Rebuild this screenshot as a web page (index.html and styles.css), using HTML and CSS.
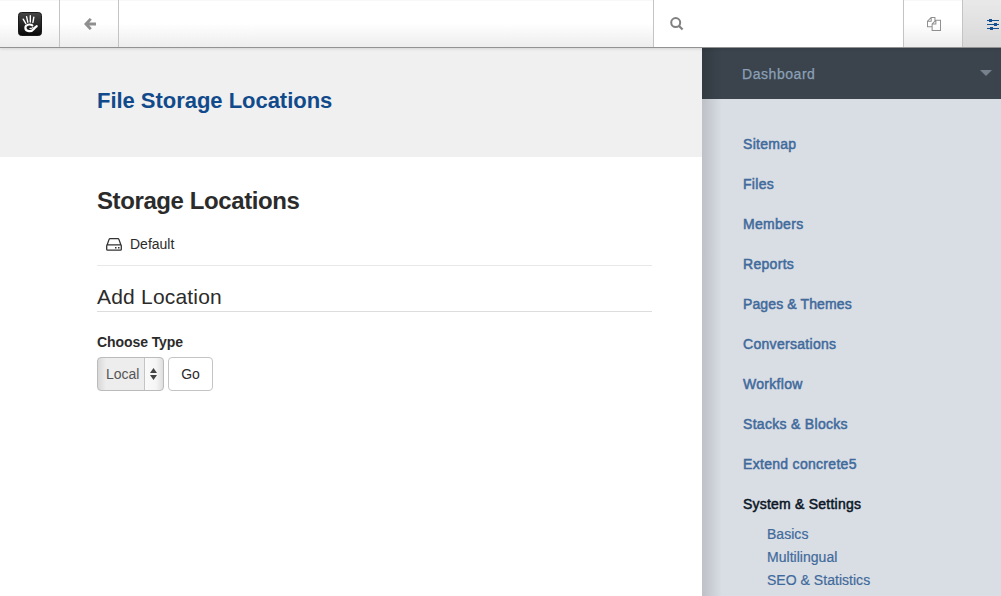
FILE: index.html
```html
<!DOCTYPE html>
<html lang="en">
<head>
<meta charset="utf-8">
<title>File Storage Locations</title>
<link rel="stylesheet" href="styles.css">
</head>
<body>
<header class="toolbar">
  <a class="tool tool-logo">
    <svg width="24" height="24" viewBox="0 0 24 24">
      <defs><linearGradient id="g" x1="0" y1="0" x2="0" y2="1"><stop offset="0" stop-color="#454545"/><stop offset="1" stop-color="#080808"/></linearGradient></defs>
      <rect x=".5" y=".5" width="23" height="23" rx="3" fill="url(#g)" stroke="#1b1b1b"/>
      <g fill="none" stroke="#fff" stroke-linecap="round">
        <path d="M5.200 7.200l2.600 4.400M8.600 4.600l1.200 5.600M12.300 3.800v6.200M15.800 5.300l-.9 5.200" stroke-width="1.400"/>
        <path d="M14.300 13.400C12 11.700 7.300 12.500 7.400 15.900c.1 4.100 6.500 4 8.600.9.900-1.300 1.600-1.900 2.700-2.600" stroke-width="2.200"/>
        <path d="M11.800 16.300c1.300.2 2.400-.1 3.300-1" stroke-width="1.100"/>
      </g>
    </svg>
  </a>
  <a class="tool tool-back">
    <svg width="12" height="12" viewBox="0 0 12 12" fill="none" stroke="#8f8f8f" stroke-width="2.800"><path d="M6.800 .9L1.900 6l4.900 5.100M2 6h10"/></svg>
  </a>
  <div class="spacer"></div>
  <div class="search">
    <svg width="14" height="14" viewBox="0 0 14 14" fill="none" stroke="#808080"><circle cx="5.700" cy="5.600" r="4.500" stroke-width="2"/><path d="M9 9l3.600 3.500" stroke-width="2.200"/></svg>
  </div>
  <a class="tool tool-pages">
    <svg width="14" height="14" viewBox="0 0 15 15" fill="none" stroke="#8f8f8f" stroke-width="1.100"><path d="M5.500 10.500h-5v-6l4-4h4v3.500M4.500 .5v4h-4M5.500 14.500v-7l4-4h5v11zM9.500 3.500v4h-4"/></svg>
  </a>
  <a class="tool tool-settings">
    <svg width="12" height="12" viewBox="0 0 12 12" fill="#164f92"><path d="M0 1h12v1H0zM0 5h12v1H0zM0 9h12v1H0zM2 0h3v3H2zM7 4h3v3H7zM3 8h3v3H3z"/></svg>
  </a>
</header>
<div class="columns">
  <main class="content">
    <div class="page-header"><h1>File Storage Locations</h1></div>
    <section class="body">
      <h2>Storage Locations</h2>
      <div class="location">
        <svg width="16" height="13" viewBox="0 0 16 13" fill="none" stroke="#333" stroke-width="1.300"><path d="M.9 7.500L3 1.600q.3-.9 1.100-.9h7.800q.8 0 1.100.9l2.100 5.900M1.500 6.900h13q.8 0 .8.8v3.600q0 .9-.9.9H1.600q-.9 0-.9-.9V7.700q0-.8.8-.8z"/><path d="M9 9h1.500v1.500H9zM12 9h1.500v1.500H12z" fill="#333" stroke="none"/></svg>
        <span>Default</span>
      </div>
      <h3><span>Add Location</span></h3>
      <label>Choose Type</label>
      <div class="controls">
        <div class="select"><span class="value">Local</span><span class="arrows"><svg width="7" height="12" viewBox="0 0 7 12" fill="#444"><path d="M3.500 0L7 5H0zM3.500 12L0 7h7z"/></svg></span></div>
        <button class="go">Go</button>
      </div>
    </section>
  </main>
  <aside class="sidebar">
    <div class="dash"><span>Dashboard</span><i class="caret"></i></div>
    <nav class="menu">
      <a>Sitemap</a>
      <a>Files</a>
      <a>Members</a>
      <a>Reports</a>
      <a class="tight">Pages &amp; Themes</a>
      <a>Conversations</a>
      <a>Workflow</a>
      <a>Stacks &amp; Blocks</a>
      <a>Extend concrete5</a>
      <a class="active">System &amp; Settings</a>
      <div class="submenu">
        <a>Basics</a>
        <a>Multilingual</a>
        <a>SEO &amp; Statistics</a>
      </div>
    </nav>
  </aside>
</div>
</body>
</html>
```
FILE: styles.css
```css
* { box-sizing: border-box; }
body {
  margin: 0;
  height: 596px;
  overflow: hidden;
  display: flex;
  flex-direction: column;
  background: #fff;
  color: #2b2b2b;
  font: 14px/20px "Liberation Sans", Arial, sans-serif;
}
svg { display: block; }
h1, h2, h3 { margin: 0; }

.toolbar {
  position: relative;
  z-index: 1;
  display: flex;
  flex: none;
  height: 48px;
  border-bottom: 1px solid #929292;
  background: linear-gradient(#f2f2f2 0, #fff 1px, #fff 50%, #ededed 100%);
  box-shadow: 0 1px 3px rgba(0, 0, 0, .12);
}
.tool { display: flex; border-right: 1px solid #c4c4c4; }
.tool-logo { width: 60px; padding: 12px 0 0 18px; }
.tool-back { width: 59px; padding: 18px 0 0 24px; }
.spacer { flex: 1; }
.search {
  width: 251px;
  padding: 17px 0 0 16px;
  border-left: 1px solid #c4c4c4;
  border-right: 1px solid #c4c4c4;
  background: #fff;
}
.tool-pages { width: 59px; padding: 17px 0 0 23px; }
.tool-settings {
  width: 38px;
  padding: 19px 0 0 24px;
  border: 0;
  background: linear-gradient(#e9e9e9, #d8d8d8);
}

.columns { display: flex; flex: 1; min-height: 0; }
.content { width: 702px; }
.page-header { height: 109px; padding: 39px 97px 0; background: #f0f0f0; }
.page-header h1 {
  color: #114a8b;
  font-size: 22px;
  line-height: 28px;
  letter-spacing: -.03px;
}
.body { padding: 28px 50px 0 97px; }
.body h2 { font-size: 24px; line-height: 32px; letter-spacing: -.4px; }
.location {
  display: flex;
  align-items: center;
  gap: 8px;
  height: 49px;
  padding: 6px 0 0 9px;
  border-bottom: 1px solid #e8e8e8;
}
.body h3 {
  height: 46px;
  padding-top: 17px;
  border-bottom: 1px solid #ddd;
  font-size: 21px;
  line-height: 28px;
  font-weight: 400;
  letter-spacing: .2px;
}
.body label { display: block; margin-top: 20px; font-weight: 700; letter-spacing: -.08px; }
.controls { display: flex; gap: 4px; margin-top: 5px; }
.select {
  display: flex;
  width: 67px;
  height: 34px;
  border: 1px solid #bbb;
  border-radius: 4px;
  background: linear-gradient(90deg, #d8d8d8, #ededed 8px, #ededed 46px, #fafafa 47px, #f5f5f5 58px, #dedede);
  color: #555;
  line-height: 32px;
}
.value { width: 47px; padding-left: 8px; border-right: 1px solid #c4c4c4; }
.arrows { padding: 10px 0 0 5px; }
.go {
  width: 45px;
  height: 34px;
  padding: 0;
  border: 1px solid #c4c4c4;
  border-radius: 4px;
  background: #fff;
  color: #2b2b2b;
  font: inherit;
}

.sidebar {
  flex: 1;
  background: linear-gradient(90deg, rgba(0, 0, 0, .13), transparent 20px), #d9dde4;
}
.dash {
  display: flex;
  justify-content: space-between;
  height: 51px;
  padding: 16px 9px 0 40px;
  background: linear-gradient(90deg, rgba(0, 0, 0, .15), transparent 20px), #3b444d;
  color: #8ba0b7;
  letter-spacing: .55px;
  -webkit-text-stroke: .25px;
}
.caret {
  height: 6px;
  margin-top: 6px;
  border: 6px solid transparent;
  border-top-color: #77818d;
  border-bottom: 0;
}
.menu { display: flex; flex-direction: column; padding: 35px 0 0 41px; }
.menu a {
  height: 20px;
  margin-bottom: 20px;
  color: #3f6a9b;
  letter-spacing: .3px;
  white-space: nowrap;
  -webkit-text-stroke: .5px;
}
.menu .tight { letter-spacing: .12px; }
.menu .active { margin-bottom: 10px; color: #0b1626; letter-spacing: .22px; }
.submenu { display: flex; flex-direction: column; gap: 3px; padding-left: 24px; }
.submenu a { margin: 0; letter-spacing: .03px; -webkit-text-stroke: .2px; }
```
